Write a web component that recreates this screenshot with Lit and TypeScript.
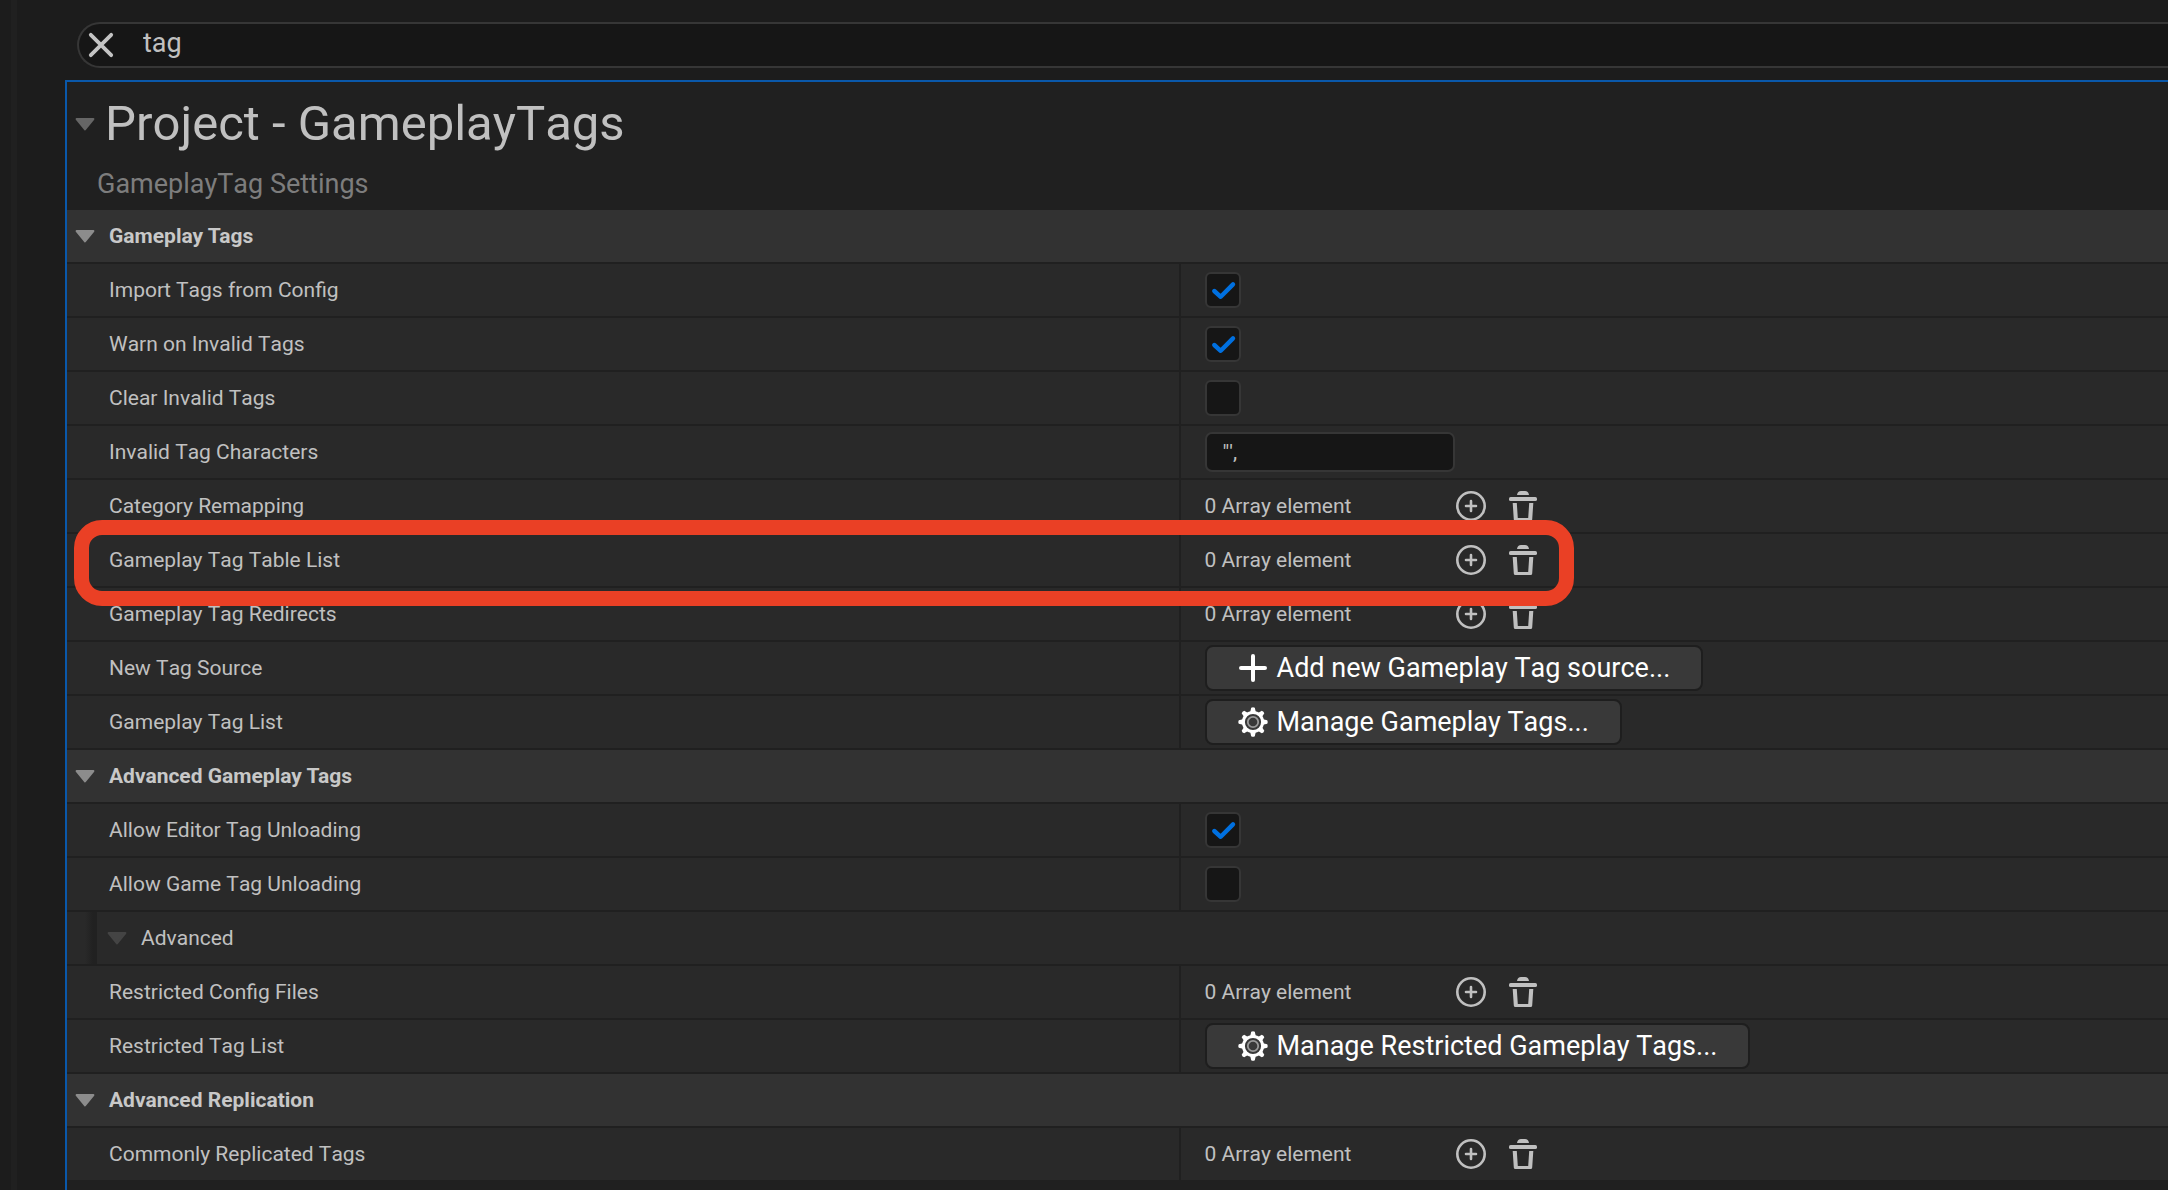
import { LitElement, html, css, svg, nothing, TemplateResult } from "lit";
import { customElement, property } from "lit/decorators.js";

type Value =
  | { kind: "check"; on: boolean }
  | { kind: "text"; text: string }
  | { kind: "array" }
  | { kind: "action"; icon: "plus" | "gear"; text: string };

interface Row {
  label: string;
  value?: Value;
  marked?: boolean;
}

interface Section {
  title: string;
  rows: Row[];
}

const sections: Section[] = [
  {
    title: "Gameplay Tags",
    rows: [
      { label: "Import Tags from Config", value: { kind: "check", on: true } },
      { label: "Warn on Invalid Tags", value: { kind: "check", on: true } },
      { label: "Clear Invalid Tags", value: { kind: "check", on: false } },
      { label: "Invalid Tag Characters", value: { kind: "text", text: "\"'," } },
      { label: "Category Remapping", value: { kind: "array" } },
      { label: "Gameplay Tag Table List", value: { kind: "array" }, marked: true },
      { label: "Gameplay Tag Redirects", value: { kind: "array" } },
      { label: "New Tag Source", value: { kind: "action", icon: "plus", text: "Add new Gameplay Tag source..." } },
      { label: "Gameplay Tag List", value: { kind: "action", icon: "gear", text: "Manage Gameplay Tags..." } },
    ],
  },
  {
    title: "Advanced Gameplay Tags",
    rows: [
      { label: "Allow Editor Tag Unloading", value: { kind: "check", on: true } },
      { label: "Allow Game Tag Unloading", value: { kind: "check", on: false } },
      { label: "Advanced" },
      { label: "Restricted Config Files", value: { kind: "array" } },
      { label: "Restricted Tag List", value: { kind: "action", icon: "gear", text: "Manage Restricted Gameplay Tags..." } },
    ],
  },
  {
    title: "Advanced Replication",
    rows: [{ label: "Commonly Replicated Tags", value: { kind: "array" } }],
  },
];

const arrow = html`<svg class="arrow" viewBox="0 0 20 13" width="20" height="13" aria-hidden="true">
  <path d="M1.6 1H18.4L10 11.4Z" fill="currentColor" stroke="currentColor" stroke-width="2" stroke-linejoin="round" />
</svg>`;

const teeth = [0, 45, 90, 135, 180, 225, 270, 315].map(
  (a) => svg`<path d="M12 6L13.2 0.8Q15 -0.2 16.8 0.8L18 6Z" transform="rotate(${a} 15 15)" fill="#fff" />`
);

const icons: Record<string, TemplateResult> = {
  close: html`<svg viewBox="0 0 26 26" width="26" height="26" aria-hidden="true">
    <path d="M2.8 2.8L23.2 23.2M23.2 2.8L2.8 23.2" stroke="#c4c4c4" stroke-width="3.8" stroke-linecap="round" />
  </svg>`,
  plus: html`<svg viewBox="0 0 30 30" width="30" height="30" aria-hidden="true">
    <path d="M15 3V27M3 15H27" stroke="#fff" stroke-width="4" stroke-linecap="round" />
  </svg>`,
  gear: html`<svg viewBox="0 0 30 30" width="30" height="30" aria-hidden="true">
    ${teeth}
    <circle cx="15" cy="15" r="9.6" fill="none" stroke="#fff" stroke-width="3" />
    <circle cx="15" cy="15" r="5.2" fill="none" stroke="#9a9a9a" stroke-width="1.8" />
  </svg>`,
  add: html`<svg viewBox="0 0 30 30" width="30" height="30" aria-hidden="true">
    <circle cx="15" cy="15" r="13.7" fill="none" stroke="#c0c0c0" stroke-width="2.6" />
    <path d="M15 10V20M10 15H20" stroke="#c0c0c0" stroke-width="2.6" stroke-linecap="round" />
  </svg>`,
  trash: html`<svg viewBox="0 0 28 30" width="28" height="30" aria-hidden="true">
    <path d="M8 4Q8.6 0 12 0H16Q19.4 0 20 4Z" fill="#c0c0c0" />
    <rect x="0" y="6" width="28" height="4" rx="1.6" fill="#c0c0c0" />
    <path fill-rule="evenodd" fill="#c0c0c0"
      d="M3.7 12H24.3L23.2 28.4Q23.1 30 21.6 30H6.4Q4.9 30 4.8 28.4ZM7.8 12L8.8 27H19.2L20.2 12Z" />
  </svg>`,
};

@customElement("settings-row")
export class SettingsRow extends LitElement {
  @property({ attribute: false }) row!: Row;

  static styles = css`
    :host {
      display: block;
    }
    * {
      box-sizing: border-box;
    }
    .row {
      position: relative;
      display: grid;
      grid-template-columns: 53% minmax(0, 1fr);
      min-height: 54px;
      border-bottom: 2px solid #202020;
      background: #292929;
      color: #c0c0c0;
      font-size: 21px;
      line-height: 28px;
    }
    .name {
      display: flex;
      align-items: center;
      padding-left: 42px;
      border-right: 2px solid #202020;
    }
    .value {
      display: flex;
      align-items: center;
      padding-left: 24px;
    }
    .group {
      grid-template-columns: 30px minmax(0, 1fr);
    }
    .gutter {
      background: linear-gradient(to right, #292929 18px, #212121 26px);
    }
    .toggle {
      display: flex;
      align-items: center;
      gap: 14px;
      padding: 0 0 0 10px;
      border: 0;
      background: none;
      color: inherit;
      font: inherit;
      text-align: left;
    }
    .arrow {
      color: #444;
    }
    .mark {
      position: absolute;
      z-index: 2;
      inset: -14px calc(47% - 393px) -20px 7px;
      border: 15px solid #ea4025;
      border-radius: 28px;
      pointer-events: none;
    }
    .box {
      position: relative;
      display: grid;
      width: 36px;
      height: 36px;
    }
    .check {
      appearance: none;
      grid-area: 1 / 1;
      width: 36px;
      height: 36px;
      margin: 0;
      border: 2px solid #363636;
      border-radius: 6px;
      background: #161616;
    }
    .tick {
      grid-area: 1 / 1;
      display: none;
      z-index: 1;
      pointer-events: none;
    }
    .check:checked + .tick {
      display: block;
    }
    .field {
      width: 250px;
      height: 40px;
      padding: 0 0 0 16px;
      border: 2px solid #363636;
      border-radius: 7px;
      background: #161616;
      color: #c0c0c0;
      font: inherit;
      font-kerning: none;
    }
    .count {
      width: 251px;
    }
    .tools {
      display: flex;
      align-items: center;
      gap: 23px;
    }
    .tool {
      display: flex;
      padding: 0;
      border: 0;
      background: none;
    }
    .action {
      display: flex;
      align-items: center;
      gap: 9px;
      height: 46px;
      padding: 0 31px;
      border: 2px solid #1e1e1e;
      border-radius: 8px;
      background: #393939;
      color: #fff;
      font: inherit;
      font-size: 27px;
      font-kerning: none;
      line-height: 32px;
      white-space: nowrap;
    }
  `;

  private renderValue(value: Value) {
    switch (value.kind) {
      case "check":
        return html`<span class="box">
          <input id="value" class="check" type="checkbox" .checked=${value.on} />
          <svg class="tick" viewBox="0 0 36 36" width="36" height="36" aria-hidden="true">
            <path d="M9.3 19L15.7 24.8L28 12.4" fill="none" stroke="#0070e0" stroke-width="4.4"
              stroke-linecap="round" stroke-linejoin="round" />
          </svg>
        </span>`;
      case "text":
        return html`<input id="value" class="field" type="text" .value=${value.text} />`;
      case "array":
        return html`<span class="count">0 Array element</span>
          <span class="tools">
            <button class="tool" aria-label="Add element">${icons.add}</button>
            <button class="tool" aria-label="Remove all elements">${icons.trash}</button>
          </span>`;
      case "action":
        return html`<button class="action">${icons[value.icon]}<span>${value.text}</span></button>`;
    }
  }

  render() {
    const { label, value, marked } = this.row;
    if (!value) {
      return html`<div class="row group">
        <span class="gutter"></span>
        <button class="toggle" aria-expanded="true">${arrow}<span>${label}</span></button>
      </div>`;
    }
    const labelled = value.kind === "check" || value.kind === "text";
    return html`<div class="row">
      <div class="name">${labelled ? html`<label for="value">${label}</label>` : html`<span>${label}</span>`}</div>
      <div class="value">${this.renderValue(value)}</div>
      ${marked ? html`<div class="mark"></div>` : nothing}
    </div>`;
  }
}

@customElement("app-root")
export class AppRoot extends LitElement {
  static styles = css`
    :host {
      display: block;
      min-height: 100vh;
      background: #1c1c1c;
      color: #c0c0c0;
      font-family: Roboto, "Liberation Sans", sans-serif;
      font-kerning: none;
    }
    * {
      box-sizing: border-box;
    }
    .page {
      display: grid;
      grid-template-columns: 6px minmax(0, 1fr);
      min-height: 100vh;
      padding-left: 11px;
    }
    .rail {
      background: #202020;
    }
    .main {
      display: flex;
      flex-direction: column;
      gap: 12px;
      padding: 22px 0 0 48px;
      overflow: hidden;
    }
    .search {
      display: flex;
      align-items: center;
      gap: 29px;
      height: 46px;
      margin-left: 12px;
      padding-left: 9px;
      border: 2px solid #363636;
      border-right: 0;
      border-radius: 23px 0 0 23px;
      background: #161616;
    }
    .clear {
      display: flex;
      padding: 0;
      border: 0;
      background: none;
    }
    .query {
      flex: 1;
      min-width: 0;
      height: 36px;
      padding: 0 0 4px;
      border: 0;
      outline: 0;
      background: none;
      color: #c0c0c0;
      font: inherit;
      font-size: 27px;
      font-kerning: none;
    }
    .panel {
      flex: 1;
      border-top: 2px solid #0a58aa;
      border-left: 2px solid #0a58aa;
      background: #202020;
    }
    .head {
      padding: 14px 0 10px;
    }
    .title {
      display: flex;
      align-items: center;
      gap: 10px;
      margin: 0;
      padding-left: 8px;
      font-size: 49px;
      font-weight: 400;
      line-height: 56px;
    }
    .title .arrow {
      color: #666;
    }
    .subtitle {
      margin: 16px 0 0;
      padding-left: 30px;
      color: #7d7d7d;
      font-size: 27px;
      line-height: 32px;
    }
    .section {
      display: flex;
      align-items: center;
      gap: 14px;
      min-height: 54px;
      margin: 0;
      padding-left: 8px;
      border-bottom: 2px solid #202020;
      background: #323232;
      color: #c8c8c8;
      font-size: 21px;
      font-weight: 700;
      font-kerning: normal;
      line-height: 28px;
    }
    .section .arrow {
      color: #8c8c8c;
    }
  `;

  render() {
    return html`<div class="page">
      <div class="rail"></div>
      <main class="main">
        <div class="search">
          <button class="clear" aria-label="Clear search">${icons.close}</button>
          <input class="query" type="text" aria-label="Search" .value=${"tag"} />
        </div>
        <div class="panel">
          <header class="head">
            <h1 class="title">${arrow}<span>Project - GameplayTags</span></h1>
            <p class="subtitle">GameplayTag Settings</p>
          </header>
          ${sections.map(
            (s) => html`<section>
              <h2 class="section">${arrow}<span>${s.title}</span></h2>
              ${s.rows.map((r) => html`<settings-row .row=${r}></settings-row>`)}
            </section>`
          )}
        </div>
      </main>
    </div>`;
  }
}
